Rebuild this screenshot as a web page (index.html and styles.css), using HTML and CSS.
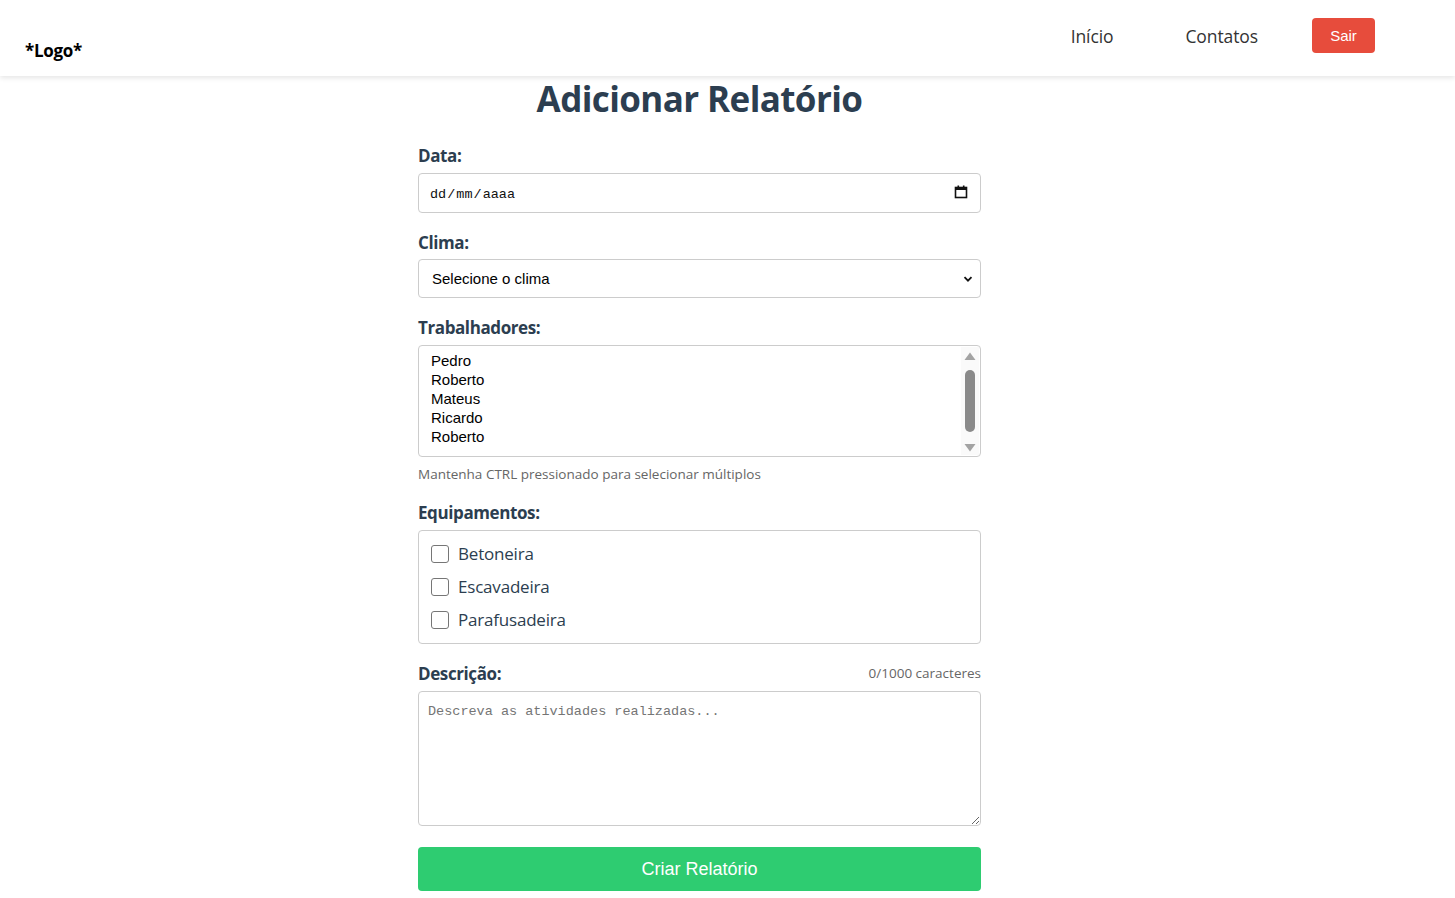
FILE: index.html
```html
<!DOCTYPE html>
<html lang="pt-BR">
<head>
<meta charset="utf-8">
<title>Adicionar Relatório</title>
<link rel="stylesheet" href="styles.css">
</head>
<body>
<header class="topbar">
  <div class="logo">*Logo*</div>
  <nav class="nav">
    <a class="nav-link" href="#">Início</a>
    <a class="nav-link" href="#">Contatos</a>
    <button class="btn-exit" type="button">Sair</button>
  </nav>
</header>

<main class="main">
  <h1 class="title">Adicionar Relatório</h1>
  <form class="form">
    <div class="group">
      <label class="label label-data">Data:</label>
      <div class="field date-field">
        <span class="date-text"><span>dd</span><span class="sep">/</span><span>mm</span><span class="sep">/</span><span>aaaa</span></span>
        <svg class="cal-icon" width="14" height="14" viewBox="0 0 14 14">
          <rect x="1.5" y="2.5" width="11" height="10" fill="none" stroke="#111" stroke-width="1.6"/>
          <rect x="1.5" y="2.5" width="11" height="2.5" fill="#111"/>
          <rect x="3.5" y="0.5" width="1.6" height="2.5" fill="#111"/>
          <rect x="8.9" y="0.5" width="1.6" height="2.5" fill="#111"/>
        </svg>
      </div>
    </div>

    <div class="group">
      <label class="label label-clima">Clima:</label>
      <div class="field select-field">
        <span class="select-text">Selecione o clima</span>
        <svg class="chevron" width="12" height="12" viewBox="0 0 12 12">
          <path d="M2.5 4.2 L6 7.7 L9.5 4.2" fill="none" stroke="#111" stroke-width="1.8"/>
        </svg>
      </div>
    </div>

    <div class="group">
      <label class="label label-trab">Trabalhadores:</label>
      <div class="field list-field">
        <ul class="options">
          <li>Pedro</li>
          <li>Roberto</li>
          <li>Mateus</li>
          <li>Ricardo</li>
          <li>Roberto</li>
        </ul>
        <div class="scrollbar">
          <svg class="arrow" width="14" height="10" viewBox="0 0 14 10"><path d="M1.5 9 L7 1.5 L12.5 9 Z" fill="#a3a3a3"/></svg>
          <div class="track"><div class="thumb"></div></div>
          <svg class="arrow" width="14" height="10" viewBox="0 0 14 10"><path d="M1.5 1 L7 8.5 L12.5 1 Z" fill="#a3a3a3"/></svg>
        </div>
      </div>
      <p class="hint">Mantenha CTRL pressionado para selecionar múltiplos</p>
    </div>

    <div class="group">
      <label class="label label-equip">Equipamentos:</label>
      <div class="checks">
        <label class="check"><input type="checkbox" class="box"><span>Betoneira</span></label>
        <label class="check"><input type="checkbox" class="box"><span>Escavadeira</span></label>
        <label class="check"><input type="checkbox" class="box"><span>Parafusadeira</span></label>
      </div>
    </div>

    <div class="group">
      <div class="desc-head">
        <label class="label label-desc">Descrição:</label>
        <span class="counter">0/1000 caracteres</span>
      </div>
      <textarea class="textarea" placeholder="Descreva as atividades realizadas..."></textarea>
    </div>

    <button class="btn-submit" type="button">Criar Relatório</button>
  </form>
</main>
</body>
</html>
```

FILE: styles.css
```css
* { box-sizing: border-box; }

html, body {
  margin: 0;
  padding: 0;
  background: #ffffff;
}

body {
  font-family: "Open Sans", "Noto Sans", sans-serif;
  color: #2c3e50;
}

.topbar {
  height: 76px;
  display: flex;
  justify-content: space-between;
  align-items: flex-start;
  padding: 0 80px 0 25px;
  background: #fff;
  box-shadow: 0 2px 5px rgba(0, 0, 0, 0.1);
  position: relative;
  z-index: 2;
}

.logo {
  margin-top: 39px;
  font-size: 17px;
  font-weight: 700;
  color: #000;
  line-height: 24px;
  letter-spacing: -0.3px;
}

.nav {
  display: flex;
  align-items: center;
  margin-top: 18px;
  height: 35px;
}

.nav-link {
  color: #333;
  text-decoration: none;
  font-size: 17.5px;
  font-weight: 500;
  letter-spacing: -0.1px;
  margin-left: 72px;
}

.nav-link:first-child { margin-left: 0; }

.btn-exit {
  margin-left: 54px;
  height: 35px;
  width: 63px;
  border: none;
  border-radius: 4px;
  background: #e74c3c;
  color: #fff;
  font-family: "Liberation Sans", Arial, sans-serif;
  font-size: 15px;
  padding: 0;
}

.main {
  width: 1399px;
  display: flex;
  flex-direction: column;
  align-items: center;
}

.title {
  margin: 0;
  font-size: 35px;
  line-height: 46px;
  font-weight: 700;
  color: #2c3e50;
  letter-spacing: -0.6px;
}

.form {
  width: 563px;
  margin-top: 24px;
}

.label {
  display: block;
  font-size: 17px;
  line-height: 20px;
  font-weight: 700;
  color: #2c3e50;
  letter-spacing: -0.4px;
}

.label-data { margin-bottom: 7px; }
.label-clima { margin-bottom: 6px; }
.label-trab { margin-bottom: 7px; }
.label-equip { margin-bottom: 7px; }

.group { margin-bottom: 20px; }

.field {
  border: 1px solid #cccccc;
  border-radius: 4px;
  background: #fff;
}

.date-field {
  height: 40px;
  display: flex;
  align-items: center;
  justify-content: space-between;
  padding: 0 12px 0 11px;
}

.date-text {
  font-family: "Liberation Mono", "DejaVu Sans Mono", monospace;
  font-size: 13.5px;
  color: #111;
  display: flex;
  align-items: center;
  margin-top: 2px;
}

.date-text .sep { margin: 0 1px; }

.cal-icon { margin-top: -2px; }

.select-field {
  height: 39px;
  display: flex;
  align-items: center;
  justify-content: space-between;
  padding: 0 6px 0 13px;
}

.select-text {
  font-family: "Liberation Sans", Arial, sans-serif;
  font-size: 15px;
  color: #000;
}

.list-field {
  height: 112px;
  display: flex;
  justify-content: space-between;
  padding: 5px 1px 1px 12px;
}

.options {
  list-style: none;
  margin: 0;
  padding: 0;
  font-family: "Liberation Sans", Arial, sans-serif;
  font-size: 15px;
  line-height: 19px;
  color: #000;
}

.scrollbar {
  width: 18px;
  margin-top: -4px;
  height: 108px;
  display: flex;
  flex-direction: column;
  align-items: center;
  justify-content: space-between;
  padding: 4px 0 2px;
  background: #fafafa;
}

.track {
  flex: 1;
  padding: 9px 0 5px;
  display: flex;
  justify-content: center;
}

.thumb {
  width: 10px;
  height: 62px;
  border-radius: 5px;
  background: #8a8a8a;
}

.hint {
  margin: 8px 0 0;
  font-size: 13.5px;
  line-height: 18px;
  color: #666;
}

.checks {
  border: 1px solid #cccccc;
  border-radius: 4px;
  padding: 6px 12px 7px;
}

.check {
  display: flex;
  align-items: center;
  height: 33px;
  font-size: 17px;
  color: #2c3e50;
  letter-spacing: -0.2px;
}

.box {
  appearance: none;
  -webkit-appearance: none;
  width: 18px;
  height: 18px;
  margin: 0 9px 0 0;
  border: 1px solid #767676;
  border-radius: 3px;
  background: #fff;
}

.desc-head {
  display: flex;
  justify-content: space-between;
  align-items: center;
  margin-bottom: 7px;
}

.counter {
  font-size: 13.5px;
  color: #666;
  margin-top: -3px;
}

.textarea {
  display: block;
  width: 100%;
  height: 135px;
  border: 1px solid #cccccc;
  border-radius: 4px;
  padding: 12px 9px 10px;
  font-family: "Liberation Mono", "DejaVu Sans Mono", monospace;
  font-size: 13.5px;
  color: #333;
  resize: vertical;
}

.textarea::placeholder { color: #757575; }

.btn-submit {
  display: block;
  width: 100%;
  height: 44px;
  margin-top: 21px;
  border: none;
  border-radius: 4px;
  background: #2ecc71;
  color: #fff;
  font-family: "Liberation Sans", Arial, sans-serif;
  font-size: 18px;
}
```
